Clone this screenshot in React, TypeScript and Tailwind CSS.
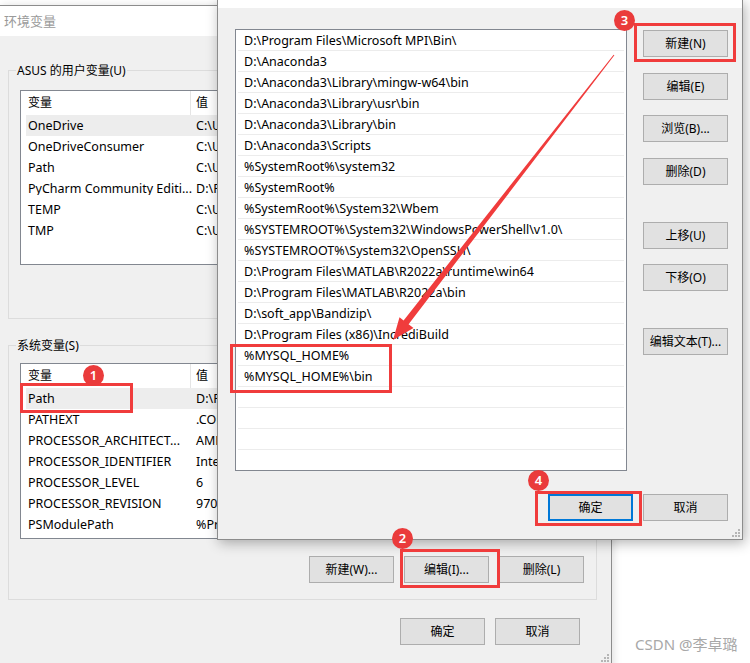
import React from 'react';

const userVars = [
  { name: 'OneDrive', value: 'C:\\Users\\ASUS\\OneDrive' },
  { name: 'OneDriveConsumer', value: 'C:\\Users\\ASUS\\OneDrive' },
  { name: 'Path', value: 'C:\\Users\\ASUS\\AppData\\Local\\Microsoft\\WindowsApps;' },
  { name: 'PyCharm Community Editi...', value: 'D:\\Program Files\\JetBrains\\PyCharm\\bin;' },
  { name: 'TEMP', value: 'C:\\Users\\ASUS\\AppData\\Local\\Temp' },
  { name: 'TMP', value: 'C:\\Users\\ASUS\\AppData\\Local\\Temp' },
];

const sysVars = [
  { name: 'Path', value: 'D:\\Program Files\\Microsoft MPI\\Bin\\;D:\\Anaconda3' },
  { name: 'PATHEXT', value: '.COM;.EXE;.BAT;.CMD;.VBS;.VBE;.JS' },
  { name: 'PROCESSOR_ARCHITECT...', value: 'AMD64' },
  { name: 'PROCESSOR_IDENTIFIER', value: 'Intel64 Family 6 Model 151' },
  { name: 'PROCESSOR_LEVEL', value: '6' },
  { name: 'PROCESSOR_REVISION', value: '9702' },
  { name: 'PSModulePath', value: '%ProgramFiles%\\WindowsPowerShell\\Modules;' },
];

const paths = [
  'D:\\Program Files\\Microsoft MPI\\Bin\\',
  'D:\\Anaconda3',
  'D:\\Anaconda3\\Library\\mingw-w64\\bin',
  'D:\\Anaconda3\\Library\\usr\\bin',
  'D:\\Anaconda3\\Library\\bin',
  'D:\\Anaconda3\\Scripts',
  '%SystemRoot%\\system32',
  '%SystemRoot%',
  '%SystemRoot%\\System32\\Wbem',
  '%SYSTEMROOT%\\System32\\WindowsPowerShell\\v1.0\\',
  '%SYSTEMROOT%\\System32\\OpenSSH\\',
  'D:\\Program Files\\MATLAB\\R2022a\\runtime\\win64',
  'D:\\Program Files\\MATLAB\\R2022a\\bin',
  'D:\\soft_app\\Bandizip\\',
  'D:\\Program Files (x86)\\IncrediBuild',
  '%MYSQL_HOME%',
  '%MYSQL_HOME%\\bin',
  '',
  '',
  '',
  '',
];

function Btn({ label, primary, className = '' }: { label: string; primary?: boolean; className?: string }) {
  return (
    <div
      className={`flex h-[27px] w-[85px] shrink-0 items-center justify-center bg-[#e1e1e1] text-[12px] text-black ${
        primary ? 'border-2 border-[#0078d7]' : 'border border-[#adadad]'
      } ${className}`}
    >
      {label}
    </div>
  );
}

function Grip() {
  return (
    <svg width="8" height="8" viewBox="0 0 8 8">
      {[
        [6, 0],
        [3, 3],
        [6, 3],
        [0, 6],
        [3, 6],
        [6, 6],
      ].map(([x, y]) => (
        <rect key={`${x}-${y}`} x={x} y={y} width="2" height="2" fill="#b5b5b5" />
      ))}
    </svg>
  );
}

function VarList({ rows, height }: { rows: { name: string; value: string }[]; height: string }) {
  return (
    <div className={`w-[566px] overflow-hidden border border-[#828790] bg-white text-[12.5px] ${height}`}>
      <div className="flex h-[24px] items-center text-[12px]">
        <div className="w-[169px] pl-[7px]">变量</div>
        <div className="h-full w-px bg-[#e5e5e5]" />
        <div className="pl-[5px]">值</div>
      </div>
      {rows.map((r, i) => (
        <div key={r.name} className={`ml-[5px] flex h-[21px] items-center pt-px ${i === 0 ? 'bg-[#ededed]' : ''}`}>
          <div className="w-[170px] shrink-0 overflow-hidden whitespace-nowrap pl-[2px]">{r.name}</div>
          <div className="whitespace-nowrap">{r.value}</div>
        </div>
      ))}
    </div>
  );
}

function Badge({ n, className }: { n: number; className: string }) {
  return (
    <div
      className={`absolute flex h-[21px] w-[21px] items-center justify-center rounded-full bg-[#ea3b3b] text-[13px] font-semibold text-white ${className}`}
    >
      {n}
    </div>
  );
}

export default function App() {
  return (
    <div className="relative h-[663px] w-[750px] overflow-hidden bg-white font-['Noto_Sans','Noto_Sans_CJK_SC',sans-serif] text-[12px] leading-none text-black">
      {/* back window: 环境变量 */}
      <div className="absolute left-0 top-[5px] h-[700px] w-[612px] border-r border-t border-[#8c8c8c] bg-[#f0f0f0] shadow-[2px_0_8px_rgba(0,0,0,0.12)]">
        <div className="flex h-[30px] items-center bg-white pl-[4px] text-[13px] text-[#9a9a9a]">环境变量</div>

        <div className="relative ml-2 mr-[14px] mt-[34px] border border-[#dcdcdc] pb-[53px] pl-[11px] pt-[19px]">
          <div className="absolute left-[7px] top-[-8px] bg-[#f0f0f0] px-px leading-[16px]">ASUS 的用户变量(U)</div>
          <VarList rows={userVars} height="h-[175px]" />
        </div>

        <div className="relative ml-2 mr-[14px] mt-[26px] border border-[#dcdcdc] pb-[16px] pl-[11px] pr-[12px] pt-[17px]">
          <div className="absolute left-[7px] top-[-8px] bg-[#f0f0f0] px-px leading-[16px]">系统变量(S)</div>
          <VarList rows={sysVars} height="h-[176px]" />
          <div className="mt-[17px] flex justify-end gap-[10px]">
            <Btn label="新建(W)..." />
            <Btn label="编辑(I)..." />
            <Btn label="删除(L)" />
          </div>
        </div>

        <div className="mt-[18px] flex justify-end gap-[10px] pr-[31px]">
          <Btn label="确定" />
          <Btn label="取消" />
        </div>
        <div className="absolute right-[2px] top-[648px]">
          <Grip />
        </div>
      </div>

      {/* front dialog: 编辑环境变量 */}
      <div className="absolute left-[217px] top-0 h-[540px] w-[526px] border-x border-b border-[#8c8c8c] bg-[#f0f0f0] shadow-[2px_3px_12px_rgba(0,0,0,0.3)]">
        <div className="h-[8px] bg-white" />
        <div className="flex pl-[17px] pt-[21px]">
          <div className="h-[442px] w-[392px] overflow-hidden border border-[#828790] bg-white text-[12.5px]">
            {paths.map((p, i) => (
              <div
                key={i}
                className="mx-[2px] flex h-[21px] items-center whitespace-nowrap border-b border-[#ececec] pl-[6px] pt-[2px]"
              >
                {p}
              </div>
            ))}
          </div>
          <div className="ml-[16px] flex flex-col pt-px">
            <Btn label="新建(N)" />
            <Btn label="编辑(E)" className="mt-[16px]" />
            <Btn label="浏览(B)..." className="mt-[15px]" />
            <Btn label="删除(D)" className="mt-[16px]" />
            <Btn label="上移(U)" className="mt-[37px]" />
            <Btn label="下移(O)" className="mt-[15px]" />
            <Btn label="编辑文本(T)..." className="mt-[37px]" />
          </div>
        </div>
        <div className="mt-[23px] flex justify-end gap-[10px] pr-[14px]">
          <Btn label="确定" primary />
          <Btn label="取消" />
        </div>
        <div className="absolute bottom-[2px] right-[2px]">
          <Grip />
        </div>
      </div>

      {/* watermark */}
      <div className="absolute left-[635px] top-[637px] text-[15px] text-[#a8a8a8]">CSDN @李卓璐</div>

      {/* annotations */}
      <div className="absolute left-[20px] top-[383px] h-[30px] w-[113px] border-[3px] border-[#f03c3c]" />
      <div className="absolute left-[230px] top-[344px] h-[49px] w-[162px] border-[3px] border-[#f03c3c]" />
      <div className="absolute left-[634px] top-[23px] h-[39px] w-[102px] border-[3px] border-[#f03c3c]" />
      <div className="absolute left-[535px] top-[491px] h-[35px] w-[107px] border-[3px] border-[#f03c3c]" />
      <div className="absolute left-[400px] top-[549px] h-[39px] w-[100px] border-[3px] border-[#f03c3c]" />

      <svg className="pointer-events-none absolute left-0 top-0" width="750" height="663" viewBox="0 0 750 663">
        <polygon
          points="614.4,55.3 408.6,324.2 413.5,328 393,340 399.5,317.2 403.6,320.4 613.6,54.7"
          fill="#f03c3c"
        />
      </svg>

      <Badge n={1} className="left-[83px] top-[365px]" />
      <Badge n={2} className="left-[392px] top-[528px]" />
      <Badge n={3} className="left-[614px] top-[10px]" />
      <Badge n={4} className="left-[528px] top-[470px]" />
    </div>
  );
}
